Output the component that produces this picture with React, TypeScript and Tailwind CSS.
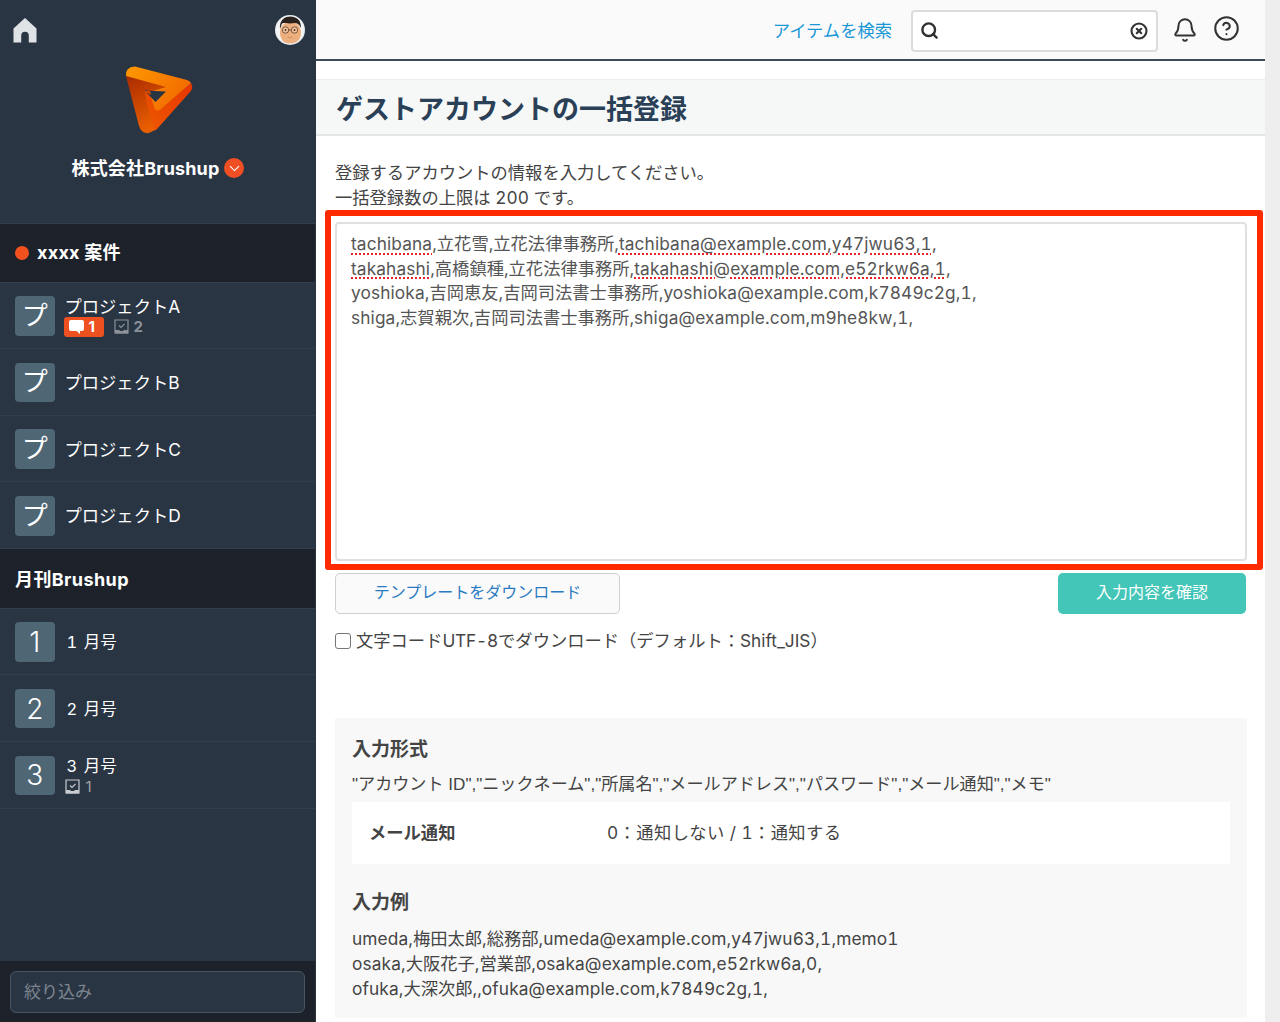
import React from "react";
import { Bell, CircleHelp, Search, CircleX, ChevronDown } from "lucide-react";

const FONT = "font-['Inter','Noto_Sans_CJK_JP',sans-serif]";

function HomeIcon() {
  return (
    <svg width="24" height="25" viewBox="0 0 24 25" className="block">
      <path d="M12 0 L23.5 10.5 V24.5 H15.8 V17.5 A3.8 3.8 0 0 0 8.2 17.5 V24.5 H0.5 V10.5 Z" fill="#dfe3e6" />
    </svg>
  );
}

function Avatar() {
  return (
    <svg width="30" height="30" viewBox="0 0 30 30" className="block">
      <defs>
        <clipPath id="av"><circle cx="15" cy="15" r="13.5" /></clipPath>
      </defs>
      <circle cx="15" cy="15" r="15" fill="#e9eef0" />
      <g clipPath="url(#av)">
        <rect width="30" height="30" fill="#f4f6f6" />
        <ellipse cx="15.5" cy="18" rx="10.5" ry="11.5" fill="#eeaf7f" />
        <path d="M5 14 C4 5 10 1 16 1 C23 1 26 6 26 13 C24 9 22 8 20 8 C15 9 10 8 8 8 C6 9 6 12 5 14 Z" fill="#2b211e" />
      </g>
      <circle cx="10.5" cy="15" r="3.2" fill="#f3c49c" stroke="#6b4a35" strokeWidth="0.9" />
      <circle cx="19.5" cy="15" r="3.2" fill="#f3c49c" stroke="#6b4a35" strokeWidth="0.9" />
      <path d="M13.7 15 H16.3" stroke="#6b4a35" strokeWidth="0.9" />
      <circle cx="10.5" cy="15" r="0.9" fill="#3a2a20" />
      <circle cx="19.5" cy="15" r="0.9" fill="#3a2a20" />
      <path d="M12.5 22 Q15 23.5 17.5 22" stroke="#c98656" strokeWidth="0.8" fill="none" />
    </svg>
  );
}

function Logo() {
  return (
    <svg width="70" height="70" viewBox="24 14 70 70" className="block">
      <defs>
        <linearGradient id="lgTop" x1="0" y1="0" x2="1" y2="0.5">
          <stop offset="0" stopColor="#ff9a00" />
          <stop offset="1" stopColor="#f26a00" />
        </linearGradient>
        <linearGradient id="lgLeft" x1="0" y1="0" x2="0.4" y2="1">
          <stop offset="0" stopColor="#a92a00" />
          <stop offset="1" stopColor="#ea6000" />
        </linearGradient>
        <linearGradient id="lgRight" x1="1" y1="0" x2="0" y2="1">
          <stop offset="0" stopColor="#e63400" />
          <stop offset="1" stopColor="#ee5a00" />
        </linearGradient>
      </defs>
      <path d="M91 33 Q94 38 90 42 L57 79 Q54 82 52 80 L44 41 L66 41 L60 59 Z" fill="url(#lgRight)" />
      <path d="M26 26 L66 36 L66 41 L44 41 L54 80 Q50 84 46 83 Q41 82 39 76 Z" fill="url(#lgLeft)" />
      <path d="M26 26 Q25 17 35 16.5 L87 30 Q90 31 91 33 L61 59 Q56 63 54 57 L49.5 42 L66 37 Z" fill="url(#lgTop)" />
      <path d="M44.5 40.5 L66 41.5 L55.5 52 Z" fill="#2a3544" />
      <path d="M44 41 L50 41 L54 57 L51 45 Z" fill="#d84a00" />
    </svg>
  );
}

function InboxCheck({ color }: { color: string }) {
  return (
    <svg width="15" height="15" viewBox="0 0 15 15" className="block">
      <path d="M1 1 H14 V14 H1 Z" fill="none" stroke={color} strokeWidth="1.2" />
      <path d="M1 11 H5 L6 12 H9 L10 11 H14 V14.5 H1 Z" fill={color} />
      <path d="M5 6.5 L7 8.5 L10.5 5" fill="none" stroke={color} strokeWidth="1.1" />
    </svg>
  );
}

function Tile({ ch, small }: { ch: string; small?: boolean }) {
  return (
    <div className={`w-[39.5px] h-[39.5px] shrink-0 rounded-[4px] bg-[#4f6675] flex items-center justify-center text-white ${small ? "text-[28px] font-light" : "text-[26px]"} leading-none`}>
      {ch}
    </div>
  );
}

function Row({ ch, label, sub, numeric }: { ch: string; label: string; sub?: React.ReactNode; numeric?: boolean }) {
  return (
    <div className="h-[66.67px] shrink-0 border-b-[1.5px] border-[#333e4d] flex items-center pl-[15px] gap-[10px] pt-[1px]">
      <Tile ch={ch} small={numeric} />
      <div className="flex flex-col pt-[1px]">
        {numeric ? (
          <div className="text-white text-[16.5px] leading-[22px] pl-[2px] tabular-nums">
            <span className="tracking-[1px]">{ch} </span>月号
          </div>
        ) : (
          <div className="text-white text-[17.3px] leading-[22px]">{label}</div>
        )}
        {sub}
      </div>
    </div>
  );
}

function SectionHeader({ children, h }: { children: React.ReactNode; h: string }) {
  return (
    <div className={`${h} shrink-0 bg-[#1c212a] border-b-[1.5px] border-[#333e4d] flex items-center pl-[15px] text-white font-bold text-[18px]`}>
      {children}
    </div>
  );
}

function Sidebar() {
  return (
    <aside className="w-[316px] shrink-0 h-full bg-[#2a3544] pr-px flex flex-col">
      <div className="h-[223.5px] shrink-0 border-b-[1.5px] border-[#333e4d] flex flex-col">
        <div className="flex items-start justify-between pt-[15px] pl-[13px] pr-[10px] h-[64px]">
          <div className="pt-[3px]"><HomeIcon /></div>
          <Avatar />
        </div>
        <div className="flex justify-center pl-[2px]"><Logo /></div>
        <div className="flex items-center justify-center gap-[5px] mt-[18px] pl-px h-[32px] text-white font-bold text-[18px]">
          <span className="tracking-[0.15px]">株式会社Brushup</span>
          <span className="w-5 h-5 rounded-full bg-[#ef4f22] flex items-center justify-center">
            <ChevronDown size={17} strokeWidth={1.5} color="#fff" />
          </span>
        </div>
      </div>
      <SectionHeader h="h-[59px] tracking-[0.25px]">
        <span className="w-[14px] h-[14px] rounded-full bg-[#f0511e] mr-2" />
        xxxx 案件
      </SectionHeader>
      <Row
        ch="プ"
        label="プロジェクトA"
        sub={
          <div className="flex items-center h-[20px] -ml-px -mt-px">
            <span className="w-10 h-[20px] rounded-[3px] bg-[#ee5020] flex items-center pl-[5px] gap-[5px] text-white font-bold text-[15px] leading-none">
              <svg width="15" height="14" viewBox="0 0 15 14">
                <path d="M2 0 H13 Q15 0 15 2 V9 Q15 11 13 11 H11 L11 14 L7.5 11 H2 Q0 11 0 9 V2 Q0 0 2 0 Z" fill="#fff" />
              </svg>
              1
            </span>
            <span className="ml-[10px]"><InboxCheck color="#8b9298" /></span>
            <span className="ml-[5px] text-[#8b9298] font-bold text-[15px] leading-none">2</span>
          </div>
        }
      />
      <Row ch="プ" label="プロジェクトB" />
      <Row ch="プ" label="プロジェクトC" />
      <Row ch="プ" label="プロジェクトD" />
      <SectionHeader h="h-[59.5px] pt-[2px] tracking-[0.4px]">月刊Brushup</SectionHeader>
      <Row ch="1" label="1 月号" numeric />
      <Row ch="2" label="2 月号" numeric />
      <Row
        ch="3"
        label="3 月号"
        numeric
        sub={
          <div className="flex items-center gap-[6px] h-[20px]">
            <InboxCheck color="#c8ccd0" />
            <span className="text-[#9aa1a7] text-[15px] leading-none">1</span>
          </div>
        }
      />
      <div className="flex-1" />
      <div className="h-[61px] shrink-0 bg-[#1c212a] px-[10px] pt-[10px]">
        <div className="h-[42px] rounded-[6px] border border-[#4a5563] bg-[#2a3544] flex items-center pl-[13px] pt-[1px] text-[17px] text-[#7d8690]">
          絞り込み
        </div>
      </div>
    </aside>
  );
}

function L({ children }: { children: React.ReactNode }) {
  return <span className="tracking-[0.12px]">{children}</span>;
}

function Underlined({ children }: { children: React.ReactNode }) {
  return <span className="tracking-[0.12px] underline decoration-dotted decoration-[#e8222a] decoration-2 underline-offset-[3px]">{children}</span>;
}

function Main() {
  return (
    <main className="flex-1 min-w-0 h-full overflow-hidden bg-white flex flex-col">
      <header className="h-[61px] shrink-0 bg-[#fafafa] border-b-2 border-[#3d4a59] flex items-center justify-end pr-[25px] pt-[2px]">
        <span className="text-[17.3px] text-[#1b98d5] mr-[19px]">アイテムを検索</span>
        <div className="w-[247px] h-[42px] rounded-[4px] border-2 border-[#dcdcdc] bg-white flex items-center justify-between pl-[7px] pr-[8px]">
          <Search size={19} strokeWidth={3} color="#2f2f2f" />
          <CircleX size={18} strokeWidth={2.8} color="#333" />
        </div>
        <Bell size={26} strokeWidth={1.8} color="#333" className="ml-[14px] mb-[2px]" />
        <CircleHelp size={27} strokeWidth={1.8} color="#333" className="ml-[15px] mb-[4px]" />
      </header>
      <div className="h-[18px] shrink-0" />
      <div className="h-[57px] shrink-0 bg-[#f6f8f8] border-t border-b-2 border-t-[#ececec] border-b-[#e3e5e5] flex items-center pl-[20px] pt-[5px]">
        <h1 className="text-[27px] font-bold text-[#2a4057] leading-none">ゲストアカウントの一括登録</h1>
      </div>
      <div className="pl-[19px] pr-[18px] pt-[24px] text-[#444] text-[17.3px] leading-[25px] tabular-nums">
        <p>登録するアカウントの情報を入力してください。</p>
        <p>一括登録数の上限は <L>200</L> です。</p>
        <div className="relative mt-[12px] h-[339px]">
          <div className="h-full rounded-[4px] border-2 border-[#e0e0e0] bg-white pl-[14px] pt-[8px] leading-[24.7px] whitespace-pre text-[#555]">
            <div><Underlined>tachibana</Underlined>,立花雪,立花法律事務所,<Underlined>tachibana@example.com,y47jwu63,1</Underlined>,</div>
            <div><Underlined>takahashi</Underlined>,高橋鎮種,立花法律事務所,<Underlined>takahashi@example.com,e52rkw6a,1</Underlined>,</div>
            <div><L>yoshioka</L>,吉岡恵友,吉岡司法書士事務所,<L>yoshioka@example.com,k7849c2g,1,</L></div>
            <div><L>shiga</L>,志賀親次,吉岡司法書士事務所,<L>shiga@example.com,m9he8kw,1,</L></div>
          </div>
          <div className="absolute left-[-10px] right-[-16px] top-[-12px] bottom-[-9px] border-[6px] border-[#ff2a00] rounded-[3px] pointer-events-none" />
        </div>
        <div className="flex justify-between mt-[12px] pr-px">
          <div className="w-[285px] h-[41px] rounded-[5px] border border-[#cfcfcf] bg-[#fafafa] flex items-center justify-center pb-[3px] text-[16px] text-[#2a7ac2]">
            テンプレートをダウンロード
          </div>
          <div className="w-[188px] h-[41px] rounded-[5px] bg-[#43c5b7] flex items-center justify-center pb-[3px] text-[16px] text-white">
            入力内容を確認
          </div>
        </div>
        <label className="flex items-center h-[25px] mt-[14px]">
          <input type="checkbox" className="w-4 h-4 m-0 mr-[5px] appearance-none border border-[#767676] rounded-[3px] bg-white" />
          文字コード<span className="tracking-[-0.2px]">UTF-8</span>でダウンロード（デフォルト：Shift_JIS）
        </label>
        <section className="mt-[65px] bg-[#f8f8f8] h-[300px] pl-[17px] pr-[17px] pt-[19px]">
          <h2 className="text-[19px] font-bold leading-[26px] text-[#444]">入力形式</h2>
          <p className="mt-[9px] font-['Liberation_Sans','Noto_Sans_CJK_JP',sans-serif] text-[17.1px]">"アカウント ID","ニックネーム","所属名","メールアドレス","パスワード","メール通知","メモ"</p>
          <div className="mt-[5px] h-[62px] bg-white flex items-center pl-[17px] pb-[2px]">
            <span className="w-[238px] font-bold">メール通知</span>
            <span className="tracking-[0.4px]">0：通知しない / 1：通知する</span>
          </div>
          <h2 className="mt-[26px] text-[19px] font-bold leading-[26px] text-[#444]">入力例</h2>
          <div className="mt-[9.5px]">
            <div><L>umeda</L>,梅田太郎,総務部,<L>umeda@example.com,y47jwu63,1,memo1</L></div>
            <div><L>osaka</L>,大阪花子,営業部,<L>osaka@example.com,e52rkw6a,0,</L></div>
            <div><L>ofuka</L>,大深次郎,,<L>ofuka@example.com,k7849c2g,1,</L></div>
          </div>
        </section>
      </div>
    </main>
  );
}

export default function App() {
  return (
    <div className={`flex w-[1280px] h-[1022px] overflow-hidden bg-white ${FONT}`}>
      <Sidebar />
      <Main />
      <div className="w-[15px] shrink-0 h-full bg-[#eeeeee]" />
    </div>
  );
}
